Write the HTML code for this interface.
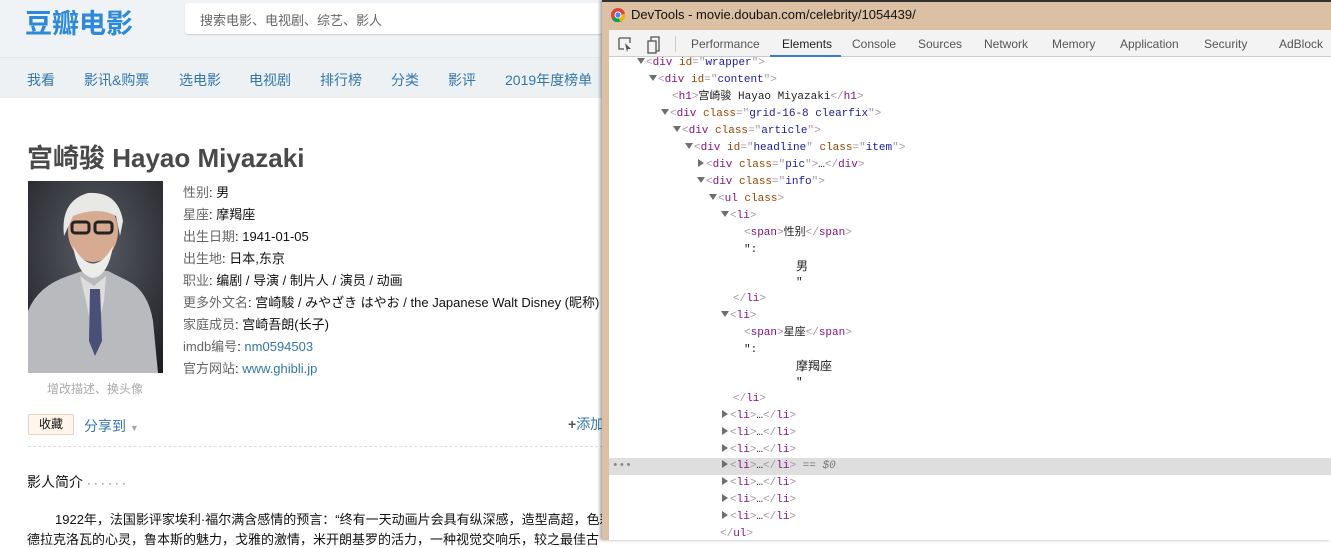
<!DOCTYPE html>
<html><head><meta charset="utf-8"><style>
*{margin:0;padding:0;box-sizing:border-box}
body{width:1331px;height:540px;overflow:hidden;position:relative;background:#fff;font-family:"Liberation Sans","Noto Sans CJK SC",sans-serif;font-size:13px;color:#111}
.a{position:absolute;white-space:nowrap}
.lnk{color:#37a}
.lab{color:#666}
.dt{font-family:"Liberation Mono","Noto Sans CJK SC",monospace;font-size:11px;line-height:17px}
.t{color:#881280}.b{color:#a894a6}.n{color:#994500}.v{color:#1a1aa6}.k{color:#222}
.tri{display:inline-block;width:0;height:0;border-left:4px solid transparent;border-right:4px solid transparent;border-top:6px solid #6e6e6e;margin-right:1px;vertical-align:1px}
.tr{display:inline-block;width:0;height:0;border-top:4px solid transparent;border-bottom:4px solid transparent;border-left:6px solid #6e6e6e;margin-right:2px;vertical-align:0px}
</style></head><body>
<div class="a" style="left:0;top:0;width:610px;height:57px;background:#f0f3f5"></div>
<div class="a" style="left:0;top:57px;width:610px;height:41px;background:#edf1f4;border-top:1px solid #e3e8eb"></div>
<div class="a" style="left:25px;top:2px;font-size:27px;font-weight:bold;color:#2e8ad8">豆瓣电影</div>
<div class="a" style="left:185px;top:3px;width:430px;height:31px;background:#fff;border-radius:3px;box-shadow:0 1px 1px #ccc"></div>
<div class="a" style="left:200px;top:10px;font-size:13px;color:#666">搜索电影、电视剧、综艺、影人</div>
<div class="a" style="top:70px;font-size:14px;color:#37a;left:0;width:610px">
<span class="a" style="left:27px">我看</span><span class="a" style="left:84px">影讯&amp;购票</span><span class="a" style="left:179px">选电影</span><span class="a" style="left:249px">电视剧</span><span class="a" style="left:320px">排行榜</span><span class="a" style="left:391px">分类</span><span class="a" style="left:448px">影评</span><span class="a" style="left:505px">2019年度榜单</span></div>
<div class="a" style="left:27px;top:138px;font-size:26px;font-weight:bold;color:#494949">宫崎骏 Hayao Miyazaki</div>
<svg class="a" style="left:28px;top:181px" width="135" height="192" viewBox="0 0 135 192">
<defs><radialGradient id="bg" cx="0.5" cy="0.35" r="0.8"><stop offset="0" stop-color="#5a5d66"/><stop offset="1" stop-color="#1d1e22"/></radialGradient></defs>
<rect width="135" height="192" fill="url(#bg)"/>
<path d="M0 130 Q10 105 40 95 L60 88 L80 90 L100 100 Q120 110 125 140 L130 192 L0 192Z" fill="#b9babd"/>
<path d="M52 95 L66 105 L78 95 L76 120 L66 160 L58 120Z" fill="#ddd"/>
<path d="M62 108 L72 108 L74 160 L67 175 L61 160Z" fill="#4a4f78"/>
<ellipse cx="65" cy="50" rx="25" ry="31" fill="#d7ab92"/>
<path d="M36 55 Q32 20 60 12 Q90 10 95 40 L92 55 L88 35 Q70 25 45 35Z" fill="#e8e8e6"/>
<path d="M45 65 Q65 100 85 65 Q80 95 65 97 Q50 95 45 65Z" fill="#ececea"/>
<rect x="44" y="41" width="17" height="11" rx="3" fill="none" stroke="#222" stroke-width="3"/>
<rect x="67" y="41" width="17" height="11" rx="3" fill="none" stroke="#222" stroke-width="3"/>
</svg>
<div class="a" style="left:47px;top:380px;font-size:12px;color:#aaa">增改描述、换头像</div>
<div class="a" style="left:183px;top:182px;line-height:22px;font-size:13px">
<div><span class="lab">性别</span>: 男</div>
<div><span class="lab">星座</span>: 摩羯座</div>
<div><span class="lab">出生日期</span>: 1941-01-05</div>
<div><span class="lab">出生地</span>: 日本,东京</div>
<div><span class="lab">职业</span>: 编剧 / 导演 / 制片人 / 演员 / 动画</div>
<div><span class="lab">更多外文名</span>: 宫崎駿 / みやざき はやお / the Japanese Walt Disney (昵称)</div>
<div><span class="lab">家庭成员</span>: 宫崎吾朗(长子)</div>
<div><span class="lab">imdb编号</span>: <span class="lnk">nm0594503</span></div>
<div><span class="lab">官方网站</span>: <span class="lnk">www.ghibli.jp</span></div>
</div>
<div class="a" style="left:28px;top:414px;width:46px;height:21px;background:#fff5eb;border:1px solid #e3d3c0;border-radius:2px;font-size:12px;text-align:center;line-height:19px">收藏</div>
<div class="a" style="left:84px;top:416px;color:#37a;font-size:14px">分享到 <span style="color:#aaa;font-size:9px">▼</span></div>
<div class="a" style="left:568px;top:414px;color:#37a;font-size:14px"><b style="color:#555">+</b>添加</div>
<div class="a" style="left:28px;top:446px;width:580px;border-top:1px dashed #ddd"></div>
<div class="a" style="left:27px;top:472px;font-size:14px;color:#111">影人简介 <span style="color:#666;letter-spacing:3px;font-size:12px">······</span></div>
<div class="a" style="left:55px;top:509px;font-size:13px">1922年，法国影评家埃利·福尔满含感情的预言：“终有一天动画片会具有纵深感，造型高超，色彩</div>
<div class="a" style="left:27px;top:529px;font-size:13px">德拉克洛瓦的心灵，鲁本斯的魅力，戈雅的激情，米开朗基罗的活力，一种视觉交响乐，较之最佳古</div>
<div class="a" style="left:602px;top:0;width:729px;height:540px;background:#dcc0a4;box-shadow:-2px 0 3px rgba(0,0,0,.35)"></div>
<div class="a" style="left:602px;top:0;width:729px;height:2px;background:#333"></div>
<svg class="a" style="left:611px;top:8px" width="14" height="14" viewBox="0 0 14 14"><circle cx="7" cy="7" r="7" fill="#db4437"/><path d="M7 7 L1 11 A7 7 0 0 0 11 13.3Z" fill="#0f9d58"/><path d="M7 7 L14 6 A7 7 0 0 1 9 13.7Z" fill="#f4b400"/><circle cx="7" cy="7" r="3.5" fill="#fff"/><circle cx="7" cy="7" r="2.6" fill="#4285f4"/></svg>
<div class="a" style="left:631px;top:7px;font-size:13px;color:#111">DevTools - movie.douban.com/celebrity/1054439/</div>
<div class="a" style="left:609px;top:30px;width:722px;height:510px;background:#fff"></div>
<div class="a" style="left:609px;top:30px;width:722px;height:27px;background:#f3f3f3;border-bottom:1px solid #ccc"></div>
<svg class="a" style="left:617px;top:36px" width="50" height="18" viewBox="0 0 50 18"><path d="M2 2h11v5M2 2v11h5" fill="none" stroke="#555" stroke-width="1.3"/><path d="M8 7l6 6-3 0-1 3z" fill="#555"/><rect x="31" y="5" width="8" height="12" fill="none" stroke="#555" stroke-width="1.3"/><path d="M34 5V1h8v14h-3" fill="none" stroke="#555" stroke-width="1.3"/></svg>
<div class="a" style="left:675px;top:36px;width:1px;height:16px;background:#ccc"></div>
<div class="a" style="top:37px;left:0;font-size:12px;color:#555">
<span class="a" style="left:691px">Performance</span><span class="a" style="left:782px;color:#222">Elements</span><span class="a" style="left:852px">Console</span><span class="a" style="left:918px">Sources</span><span class="a" style="left:984px">Network</span><span class="a" style="left:1052px">Memory</span><span class="a" style="left:1120px">Application</span><span class="a" style="left:1204px">Security</span><span class="a" style="left:1279px">AdBlock</span></div>
<div class="a" style="left:770px;top:55px;width:71px;height:2px;background:#3879d9"></div>
<div class="a" style="left:609px;top:458px;width:722px;height:17px;background:#dedede"></div>
<div class="a dt" style="left:612px;top:458px;color:#888">•••</div>
<div class="a dt" style="left:0;top:55px">
<div class="a" style="left:637px;top:0"><span class="tri"></span><span class="b">&lt;</span><span class="t">div</span> <span class="n">id</span><span class="b">="</span><span class="v">wrapper</span><span class="b">"&gt;</span></div>
<div class="a" style="left:649px;top:17px"><span class="tri"></span><span class="b">&lt;</span><span class="t">div</span> <span class="n">id</span><span class="b">="</span><span class="v">content</span><span class="b">"&gt;</span></div>
<div class="a" style="left:672px;top:34px"><span class="b">&lt;</span><span class="t">h1</span><span class="b">&gt;</span><span class="k">宫崎骏 Hayao Miyazaki</span><span class="b">&lt;/</span><span class="t">h1</span><span class="b">&gt;</span></div>
<div class="a" style="left:661px;top:51px"><span class="tri"></span><span class="b">&lt;</span><span class="t">div</span> <span class="n">class</span><span class="b">="</span><span class="v">grid-16-8 clearfix</span><span class="b">"&gt;</span></div>
<div class="a" style="left:673px;top:68px"><span class="tri"></span><span class="b">&lt;</span><span class="t">div</span> <span class="n">class</span><span class="b">="</span><span class="v">article</span><span class="b">"&gt;</span></div>
<div class="a" style="left:685px;top:85px"><span class="tri"></span><span class="b">&lt;</span><span class="t">div</span> <span class="n">id</span><span class="b">="</span><span class="v">headline</span><span class="b">"</span> <span class="n">class</span><span class="b">="</span><span class="v">item</span><span class="b">"&gt;</span></div>
<div class="a" style="left:698px;top:102px"><span class="tr"></span><span class="b">&lt;</span><span class="t">div</span> <span class="n">class</span><span class="b">="</span><span class="v">pic</span><span class="b">"&gt;</span><span class="k">…</span><span class="b">&lt;/</span><span class="t">div</span><span class="b">&gt;</span></div>
<div class="a" style="left:697px;top:119px"><span class="tri"></span><span class="b">&lt;</span><span class="t">div</span> <span class="n">class</span><span class="b">="</span><span class="v">info</span><span class="b">"&gt;</span></div>
<div class="a" style="left:709px;top:136px"><span class="tri"></span><span class="b">&lt;</span><span class="t">ul</span> <span class="n">class</span><span class="b">&gt;</span></div>
<div class="a" style="left:721px;top:153px"><span class="tri"></span><span class="b">&lt;</span><span class="t">li</span><span class="b">&gt;</span></div>
<div class="a" style="left:744px;top:170px"><span class="b">&lt;</span><span class="t">span</span><span class="b">&gt;</span><span class="k">性别</span><span class="b">&lt;/</span><span class="t">span</span><span class="b">&gt;</span></div>
<div class="a k" style="left:744px;top:187px">":</div>
<div class="a k" style="left:796px;top:204px;font-size:12px">男</div>
<div class="a k" style="left:796px;top:220px">"</div>
<div class="a" style="left:733px;top:236px"><span class="b">&lt;/</span><span class="t">li</span><span class="b">&gt;</span></div>
<div class="a" style="left:721px;top:253px"><span class="tri"></span><span class="b">&lt;</span><span class="t">li</span><span class="b">&gt;</span></div>
<div class="a" style="left:744px;top:270px"><span class="b">&lt;</span><span class="t">span</span><span class="b">&gt;</span><span class="k">星座</span><span class="b">&lt;/</span><span class="t">span</span><span class="b">&gt;</span></div>
<div class="a k" style="left:744px;top:287px">":</div>
<div class="a k" style="left:796px;top:304px;font-size:12px">摩羯座</div>
<div class="a k" style="left:796px;top:320px">"</div>
<div class="a" style="left:733px;top:336px"><span class="b">&lt;/</span><span class="t">li</span><span class="b">&gt;</span></div>
<div class="a" style="left:722px;top:353px"><span class="tr"></span><span class="b">&lt;</span><span class="t">li</span><span class="b">&gt;</span><span class="k">…</span><span class="b">&lt;/</span><span class="t">li</span><span class="b">&gt;</span></div>
<div class="a" style="left:722px;top:370px"><span class="tr"></span><span class="b">&lt;</span><span class="t">li</span><span class="b">&gt;</span><span class="k">…</span><span class="b">&lt;/</span><span class="t">li</span><span class="b">&gt;</span></div>
<div class="a" style="left:722px;top:387px"><span class="tr"></span><span class="b">&lt;</span><span class="t">li</span><span class="b">&gt;</span><span class="k">…</span><span class="b">&lt;/</span><span class="t">li</span><span class="b">&gt;</span></div>
<div class="a" style="left:722px;top:403px"><span class="tr"></span><span class="b">&lt;</span><span class="t">li</span><span class="b">&gt;</span><span class="k">…</span><span class="b">&lt;/</span><span class="t">li</span><span class="b">&gt;</span> <span style="color:#777">== <i>$0</i></span></div>
<div class="a" style="left:722px;top:420px"><span class="tr"></span><span class="b">&lt;</span><span class="t">li</span><span class="b">&gt;</span><span class="k">…</span><span class="b">&lt;/</span><span class="t">li</span><span class="b">&gt;</span></div>
<div class="a" style="left:722px;top:437px"><span class="tr"></span><span class="b">&lt;</span><span class="t">li</span><span class="b">&gt;</span><span class="k">…</span><span class="b">&lt;/</span><span class="t">li</span><span class="b">&gt;</span></div>
<div class="a" style="left:722px;top:454px"><span class="tr"></span><span class="b">&lt;</span><span class="t">li</span><span class="b">&gt;</span><span class="k">…</span><span class="b">&lt;/</span><span class="t">li</span><span class="b">&gt;</span></div>
<div class="a" style="left:720px;top:471px"><span class="b">&lt;/</span><span class="t">ul</span><span class="b">&gt;</span></div>
</div>
</body></html>
